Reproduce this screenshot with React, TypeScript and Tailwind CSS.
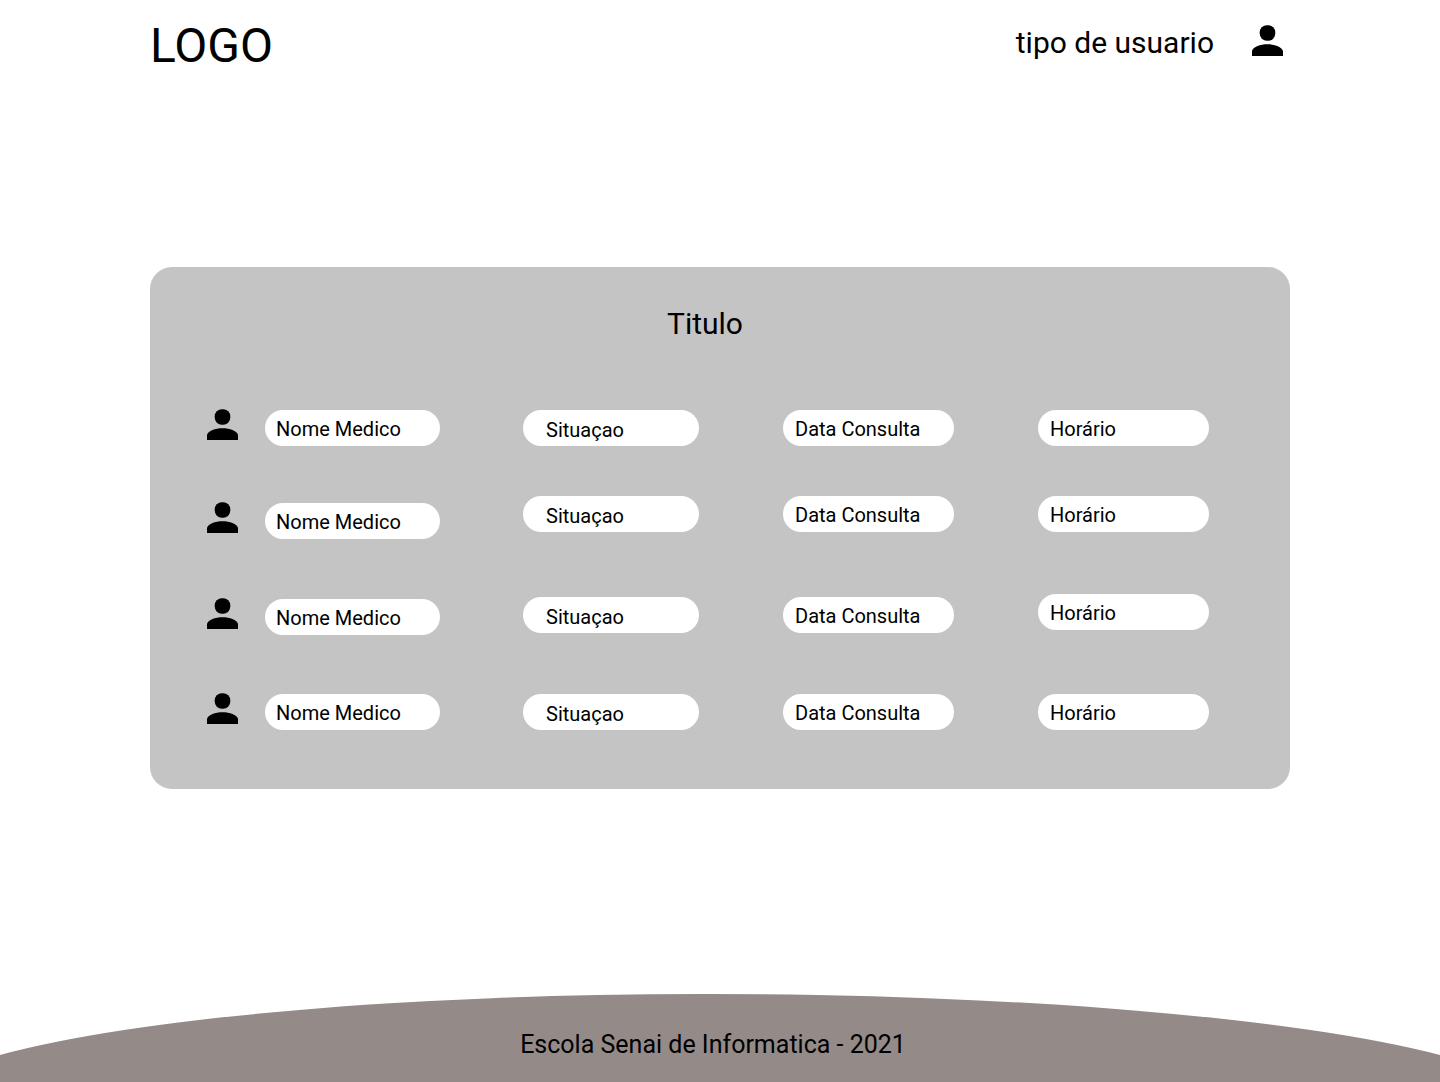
type Appointment = {
  id: number;
  height: string;
  first: string;
  middle: string;
  last: string;
};

const appointments: Appointment[] = [
  { id: 1, height: 'h-[87px] [&>td]:pb-[50px]', first: 'align-bottom', middle: 'align-bottom', last: 'align-bottom' },
  { id: 2, height: 'h-[98px] [&>td]:pb-[55px]', first: 'align-bottom', middle: 'align-top', last: 'align-top' },
  { id: 3, height: 'h-[99px] [&>td]:pb-[58px]', first: 'align-bottom', middle: 'align-middle', last: 'align-top' },
  { id: 4, height: 'h-[37px]', first: 'align-bottom', middle: 'align-bottom', last: 'align-bottom' },
];

function PersonIcon() {
  return (
    <svg viewBox="0 0 31 31" className="size-[31px] shrink-0" fill="currentColor" aria-hidden="true">
      <rect x="7.700" y="0.200" width="15.600" height="15.600" rx="7.200" />
      <path d="M0 31v-5.200C1.500 21.800 8 19.300 15.500 19.300S29.500 21.800 31 25.800V31z" />
    </svg>
  );
}

const pill = 'flex h-9 items-center rounded-full bg-white';

export default function App() {
  return (
    <div className="flex min-h-screen flex-col bg-white font-['Roboto',sans-serif] text-black">
      <header className="mx-auto flex h-[87px] w-full max-w-[1140px] items-start justify-between pr-[7px]">
        <div className="pt-[22px] text-5xl leading-[48px]">LOGO</div>
        <div className="flex items-start gap-[38px] pt-[25px]">
          <span className="text-3xl">tipo de usuario</span>
          <PersonIcon />
        </div>
      </header>

      <main className="mx-auto w-full max-w-[1140px] flex-1 pt-[180px]">
        <section className="rounded-[22px] bg-[#c4c4c4] pt-[39px] pr-[81px] pb-[59px] pl-[57px]">
          <h1 className="mb-[67px] pr-[6px] text-center text-3xl">Titulo</h1>
          <table className="w-full table-fixed border-collapse text-left text-xl">
            <colgroup>
              <col className="w-[316px]" />
              <col className="w-[260px]" />
              <col className="w-[255px]" />
              <col className="w-[171px]" />
            </colgroup>
            <tbody>
              {appointments.map((row) => (
                <tr key={row.id} className={row.height}>
                  <td className={row.first}>
                    <div className="flex items-end gap-[27px]">
                      <span className="pb-[6px]">
                        <PersonIcon />
                      </span>
                      <span className={`${pill} w-[175px] pt-[2px] pl-[11px]`}>Nome Medico</span>
                    </div>
                  </td>
                  <td className={row.middle}>
                    <div className={`${pill} w-[176px] pt-1 pl-[23px]`}>Situaçao</div>
                  </td>
                  <td className={row.middle}>
                    <div className={`${pill} w-[171px] pt-[2px] pl-3`}>Data Consulta</div>
                  </td>
                  <td className={row.last}>
                    <div className={`${pill} w-[171px] pt-[2px] pl-3`}>Horário</div>
                  </td>
                </tr>
              ))}
            </tbody>
          </table>
        </section>
      </main>

      <footer className="relative h-[88px]">
        <svg
          viewBox="0 0 1440 88"
          preserveAspectRatio="none"
          className="absolute inset-0 size-full"
          fill="#948a88"
          aria-hidden="true"
        >
          <path d="M0 61A798 115 0 0 1 705 0A832 115 0 0 1 1440 61V88H0Z" />
        </svg>
        <p className="relative pt-[33px] pr-[14px] text-center text-[25px] leading-9">
          Escola Senai de Informatica - 2021
        </p>
      </footer>
    </div>
  );
}
